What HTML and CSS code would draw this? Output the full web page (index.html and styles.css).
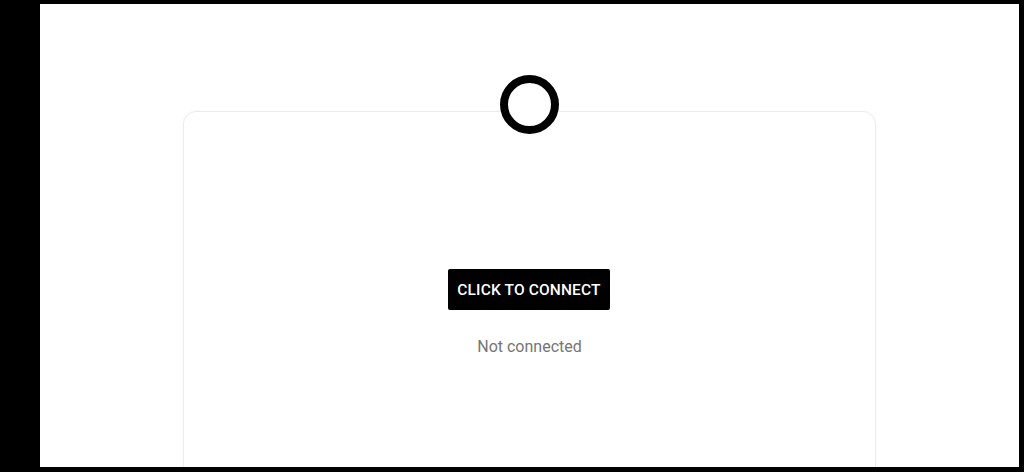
FILE: index.html
```html
<!DOCTYPE html>
<html>
<head>
<meta charset="utf-8">
<link rel="stylesheet" href="styles.css">
</head>
<body>
<div class="screen">
  <div class="stage">
    <div class="ring"></div>
    <div class="card">
      <button class="connect">CLICK TO CONNECT</button>
      <div class="status">Not connected</div>
    </div>
  </div>
</div>
</body>
</html>
```

FILE: styles.css
```css
html, body {
  margin: 0;
  padding: 0;
  background: #000;
  height: 472px;
  overflow: hidden;
}
.screen {
  margin: 4px 5px 0 40px;
  height: 463px;
  background: #fff;
  overflow: hidden;
  font-family: Roboto, "Liberation Sans", sans-serif;
}
.stage {
  position: relative;
  padding-top: 107px;
  padding-left: 143px;
  width: 693px;
}
.ring {
  position: absolute;
  left: 460px;
  top: 71px;
  width: 43px;
  height: 43px;
  border: 8px solid #000;
  border-radius: 50%;
  background: #fff;
  z-index: 2;
}
.card {
  box-sizing: border-box;
  width: 693px;
  height: 420px;
  border: 1.5px solid #ececec;
  border-radius: 13px;
  box-shadow: 0 0 2px rgba(0,0,0,0.06);
  display: flex;
  flex-direction: column;
  align-items: center;
  padding-top: 157px;
}
.connect {
  width: 162px;
  height: 41px;
  margin-left: -1px;
  background: #000;
  color: #fff;
  border: none;
  border-radius: 2px;
  font-family: Roboto, "Liberation Sans", sans-serif;
  font-weight: 500;
  font-size: 15.5px;
  letter-spacing: 0.15px;
  padding: 0;
}
.status {
  margin-top: 27px;
  color: #757575;
  font-size: 16px;
}
```
